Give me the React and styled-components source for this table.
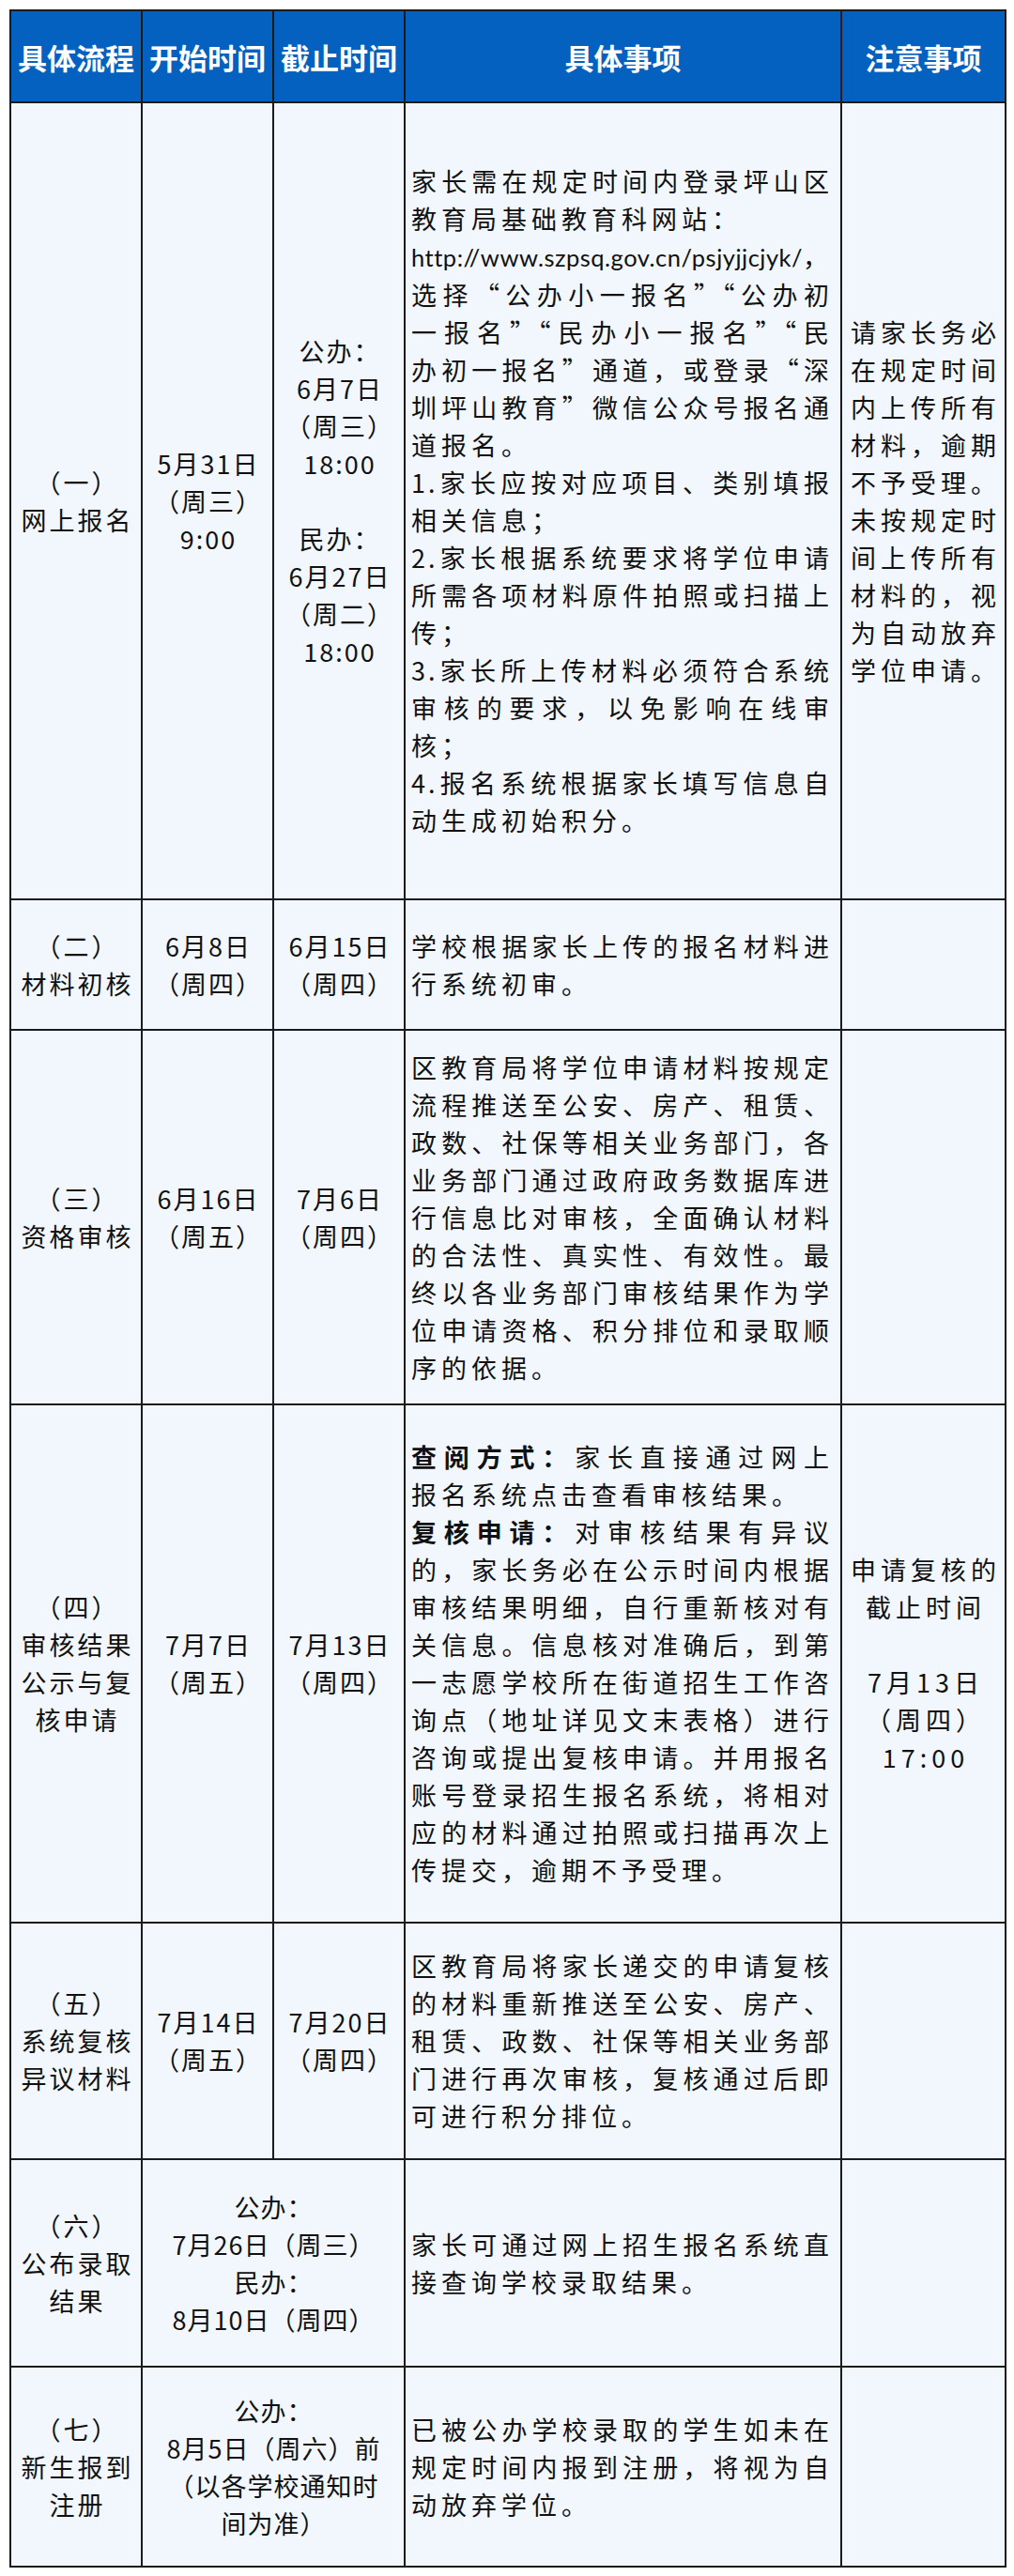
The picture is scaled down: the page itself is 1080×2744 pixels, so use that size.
import React from 'react'
import styled, { createGlobalStyle } from 'styled-components'

const GlobalStyle = createGlobalStyle`
  html, body {
    margin: 0;
    padding: 0;
    background: #ffffff;
  }
  body {
    font-family: "Noto Sans CJK SC", "Noto Sans", sans-serif;
    color: #111;
    min-height: 2744px;
  }
`

const Page = styled.div`
  padding: 10px;
`

const Table = styled.table`
  width: 1060px;
  border-collapse: collapse;
  table-layout: fixed;
  background: #f2f7fd;
`

const HeadRow = styled.tr`
  height: 98px;
`

const HeadCell = styled.th`
  background: #0461bf;
  color: #ffffff;
  font-weight: 700;
  font-size: 31px;
  line-height: 1;
  border: 2px solid #1b1b1b;
  padding: 0;
  text-align: center;
  vertical-align: middle;
`

const Row = styled.tr`
  height: ${p => p.$h}px;
`

const Cell = styled.td`
  border: 2px solid #1b1b1b;
  vertical-align: middle;
  padding: ${p => (p.$text ? '0 9px 0 6px' : '0')};
  text-align: ${p => (p.$text ? 'left' : 'center')};
`

const Line = styled.div`
  font-size: 27px;
  line-height: 40px;
  min-height: 40px;
  letter-spacing: ${p => p.$ls}px;
  padding-left: ${p => (p.$center ? p.$ls : 0)}px;
  text-align: ${p => (p.$full ? 'justify' : 'inherit')};
  text-align-last: ${p => (p.$full ? 'justify' : 'auto')};
`

const Bold = styled.b`
  font-weight: 700;
`

const Url = styled.span`
  font-family: "Lato", "Open Sans", sans-serif;
  font-size: 25.5px;
  letter-spacing: 0.5px;
`

const rows = [
  {
    h: 849,
    step: ['（一）', '网上报名'],
    start: ['5月31日', '（周三）', '9:00'],
    end: ['公办：', '6月7日', '（周三）', '18:00', '', '民办：', '6月27日', '（周二）', '18:00'],
    detail: [
      ['家长需在规定时间内登录坪山区', '教育局基础教育科网站：'],
      [{ url: 'http://www.szpsq.gov.cn/psjyjjcjyk/', tail: '，' }],
      [
        '选择“公办小一报名”“公办初',
        '一报名”“民办小一报名”“民',
        '办初一报名”通道，或登录“深',
        '圳坪山教育”微信公众号报名通',
        '道报名。',
      ],
      ['1.家长应按对应项目、类别填报', '相关信息；'],
      ['2.家长根据系统要求将学位申请', '所需各项材料原件拍照或扫描上', '传；'],
      ['3.家长所上传材料必须符合系统', '审核的要求，以免影响在线审', '核；'],
      ['4.报名系统根据家长填写信息自', '动生成初始积分。'],
    ],
    note: ['请家长务必', '在规定时间', '内上传所有', '材料，逾期', '不予受理。', '未按规定时', '间上传所有', '材料的，视', '为自动放弃', '学位申请。'],
  },
  {
    h: 139,
    step: ['（二）', '材料初核'],
    start: ['6月8日', '（周四）'],
    end: ['6月15日', '（周四）'],
    detail: [['学校根据家长上传的报名材料进', '行系统初审。']],
  },
  {
    h: 399,
    step: ['（三）', '资格审核'],
    start: ['6月16日', '（周五）'],
    end: ['7月6日', '（周四）'],
    detail: [
      [
        '区教育局将学位申请材料按规定',
        '流程推送至公安、房产、租赁、',
        '政数、社保等相关业务部门，各',
        '业务部门通过政府政务数据库进',
        '行信息比对审核，全面确认材料',
        '的合法性、真实性、有效性。最',
        '终以各业务部门审核结果作为学',
        '位申请资格、积分排位和录取顺',
        '序的依据。',
      ],
    ],
  },
  {
    h: 552,
    step: ['（四）', '审核结果', '公示与复', '核申请'],
    start: ['7月7日', '（周五）'],
    end: ['7月13日', '（周四）'],
    detail: [
      [{ b: '查阅方式：', t: '家长直接通过网上' }, '报名系统点击查看审核结果。'],
      [
        { b: '复核申请：', t: '对审核结果有异议' },
        '的，家长务必在公示时间内根据',
        '审核结果明细，自行重新核对有',
        '关信息。信息核对准确后，到第',
        '一志愿学校所在街道招生工作咨',
        '询点（地址详见文末表格）进行',
        '咨询或提出复核申请。并用报名',
        '账号登录招生报名系统，将相对',
        '应的材料通过拍照或扫描再次上',
        '传提交，逾期不予受理。',
      ],
    ],
    note: ['申请复核的', '截止时间', '', '7月13日', '（周四）', '17:00'],
  },
  {
    h: 252,
    step: ['（五）', '系统复核', '异议材料'],
    start: ['7月14日', '（周五）'],
    end: ['7月20日', '（周四）'],
    detail: [
      [
        '区教育局将家长递交的申请复核',
        '的材料重新推送至公安、房产、',
        '租赁、政数、社保等相关业务部',
        '门进行再次审核，复核通过后即',
        '可进行积分排位。',
      ],
    ],
  },
  {
    h: 221,
    step: ['（六）', '公布录取', '结果'],
    span: ['公办：', '7月26日（周三）', '民办：', '8月10日（周四）'],
    detail: [['家长可通过网上招生报名系统直', '接查询学校录取结果。']],
  },
  {
    h: 213,
    step: ['（七）', '新生报到', '注册'],
    span: ['公办：', '8月5日（周六）前', '（以各学校通知时', '间为准）'],
    detail: [['已被公办学校录取的学生如未在', '规定时间内报到注册，将视为自', '动放弃学位。']],
  },
]

const CenterLines = ({ lines, ls }) =>
  lines.map((l, i) => (
    <Line key={i} $ls={ls} $center>
      {l || '\u00a0'}
    </Line>
  ))

const DetailLines = ({ paras }) =>
  paras.map((para, pi) =>
    para.map((line, i) => {
      const full = i < para.length - 1
      let content = line
      if (line.url) {
        content = (
          <>
            <Url>{line.url}</Url>
            {line.tail}
          </>
        )
      } else if (line.b) {
        content = (
          <>
            <Bold>{line.b}</Bold>
            {line.t}
          </>
        )
      }
      return (
        <Line key={pi + '-' + i} $full={full} $ls={full ? 3 : 5}>
          {content}
        </Line>
      )
    })
  )

export default function App() {
  return (
    <Page>
      <GlobalStyle />
      <Table>
        <colgroup>
          <col style={{ width: 140 }} />
          <col style={{ width: 140 }} />
          <col style={{ width: 140 }} />
          <col style={{ width: 465 }} />
          <col style={{ width: 175 }} />
        </colgroup>
        <thead>
          <HeadRow>
            <HeadCell>具体流程</HeadCell>
            <HeadCell>开始时间</HeadCell>
            <HeadCell>截止时间</HeadCell>
            <HeadCell>具体事项</HeadCell>
            <HeadCell>注意事项</HeadCell>
          </HeadRow>
        </thead>
        <tbody>
          {rows.map((r, i) => (
            <Row key={i} $h={r.h}>
              <Cell>
                <CenterLines lines={r.step} ls={3} />
              </Cell>
              {r.span ? (
                <Cell colSpan={2}>
                  <CenterLines lines={r.span} ls={1} />
                </Cell>
              ) : (
                <>
                  <Cell>
                    <CenterLines lines={r.start} ls={2} />
                  </Cell>
                  <Cell>
                    <CenterLines lines={r.end} ls={2} />
                  </Cell>
                </>
              )}
              <Cell $text>
                <DetailLines paras={r.detail} />
              </Cell>
              <Cell>{r.note && <CenterLines lines={r.note} ls={5} />}</Cell>
            </Row>
          ))}
        </tbody>
      </Table>
    </Page>
  )
}
